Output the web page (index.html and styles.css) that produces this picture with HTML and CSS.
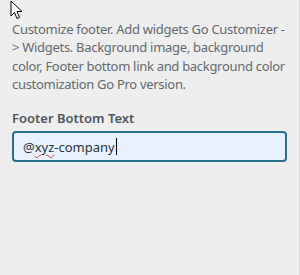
FILE: index.html
```html
<!DOCTYPE html>
<html lang="en">
<head>
    <meta charset="UTF-8">
    <title>Footer Bottom Text</title>
    <link rel="stylesheet" href="styles.css">
</head>
<body>
    <div class="panel">
        <svg class="pointer" width="14" height="20" viewBox="0 0 14 20">
            <path d="M1 1 L1 16 L4.5 12.5 L7 18.5 L9.5 17.5 L7 11.5 L12 11.5 Z" fill="#fff" stroke="#000" stroke-width="1"/>
        </svg>
        <p class="description">Customize footer. Add widgets Go Customizer -<br>&gt; Widgets. Background image, background<br>color, Footer bottom link and background color<br>customization Go Pro version.</p>

        <div class="control">
            <label class="control-title" for="footer-text">Footer Bottom Text</label>
            <div class="text-input" id="footer-text">
                <span>@</span><span class="misspelled">xyz</span><span>-company</span><span class="caret"></span>
            </div>
        </div>
    </div>
</body>
</html>
```

FILE: styles.css
```css
body {
    margin: 0;
    background-color: #eeeeee;
}

.panel {
    position: relative;
    height: 275px;
    padding: 20px 12px 0 12px;
    box-sizing: border-box;
    border-right: 1px solid #dcdcde;
    font-family: "Noto Sans", "Open Sans", sans-serif;
}

.pointer {
    position: absolute;
    top: 0;
    left: 10px;
}

.description {
    margin: 0;
    font-size: 13px;
    line-height: 18.3px;
    letter-spacing: -0.3px;
    white-space: nowrap;
    color: #646970;
}

.control {
    margin-top: 16px;
}

.control-title {
    display: block;
    font-size: 13px;
    font-weight: 600;
    color: #50575e;
    margin-bottom: 4px;
}

.text-input {
    display: flex;
    align-items: center;
    height: 31px;
    width: 275px;
    box-sizing: border-box;
    padding: 0 9px;
    background-color: #e8f2fd;
    border: 2px solid #2a6f8f;
    border-radius: 4px;
    font-size: 13px;
    color: #2c3338;
}

.misspelled {
    text-decoration: underline wavy #d63638;
    text-decoration-thickness: 1px;
    text-underline-offset: 2px;
}

.caret {
    display: inline-block;
    width: 1px;
    height: 17px;
    background-color: #000;
    margin-left: 1px;
}
```
